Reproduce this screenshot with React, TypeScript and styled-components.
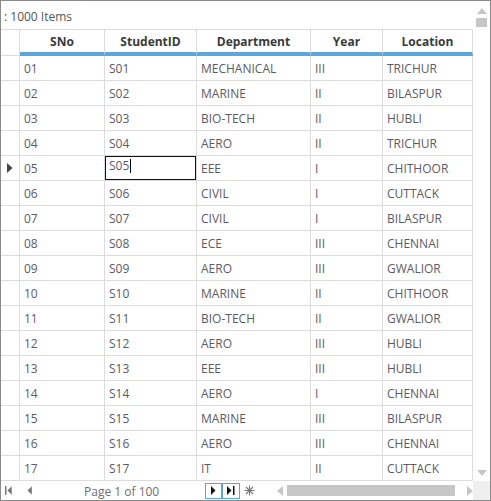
import React from "react";
import styled, { createGlobalStyle } from "styled-components";

const GlobalStyle = createGlobalStyle`
  html, body {
    margin: 0;
    padding: 0;
    background: #ffffff;
  }
  body {
    font-family: "Segoe UI", "Open Sans", "Noto Sans", sans-serif;
  }
  * {
    box-sizing: border-box;
  }
`;

const COLUMNS = "19px 85px 92px 114px 72px 90px";
const LINE = "#dcdcdc";
const ACCENT = "#5ba6dc";

type Student = {
  sno: string;
  id: string;
  dept: string;
  year: string;
  location: string;
};

const students: Student[] = [
  ["01", "S01", "MECHANICAL", "III", "TRICHUR"],
  ["02", "S02", "MARINE", "II", "BILASPUR"],
  ["03", "S03", "BIO-TECH", "II", "HUBLI"],
  ["04", "S04", "AERO", "II", "TRICHUR"],
  ["05", "S05", "EEE", "I", "CHITHOOR"],
  ["06", "S06", "CIVIL", "I", "CUTTACK"],
  ["07", "S07", "CIVIL", "I", "BILASPUR"],
  ["08", "S08", "ECE", "III", "CHENNAI"],
  ["09", "S09", "AERO", "III", "GWALIOR"],
  ["10", "S10", "MARINE", "II", "CHITHOOR"],
  ["11", "S11", "BIO-TECH", "II", "GWALIOR"],
  ["12", "S12", "AERO", "III", "HUBLI"],
  ["13", "S13", "EEE", "III", "HUBLI"],
  ["14", "S14", "AERO", "I", "CHENNAI"],
  ["15", "S15", "MARINE", "III", "BILASPUR"],
  ["16", "S16", "AERO", "III", "CHENNAI"],
  ["17", "S17", "IT", "II", "CUTTACK"],
].map(([sno, id, dept, year, location]) => ({ sno, id, dept, year, location }));

const headers = ["SNo", "StudentID", "Department", "Year", "Location"];

const Frame = styled.div`
  width: 491px;
  height: 501px;
  border: 1px solid #8a8a8a;
  display: flex;
  flex-direction: column;
  background: #fff;
  overflow: hidden;
`;

const Main = styled.div`
  display: flex;
  height: 480px;
`;

const GridArea = styled.div`
  width: 472px;
  display: flex;
  flex-direction: column;
`;

const TopBar = styled.div`
  height: 28px;
  display: flex;
  align-items: center;
  padding: 2px 0 0 3px;
  font-size: 12px;
  color: #555;
`;

const HeaderRow = styled.div`
  display: grid;
  grid-template-columns: ${COLUMNS};
  height: 27px;
  border-top: 1px solid ${LINE};
`;

const HeaderCell = styled.div<{ $blank?: boolean }>`
  display: flex;
  align-items: center;
  justify-content: center;
  padding-top: 1px;
  font-size: 12px;
  font-weight: 700;
  color: #3a3a3a;
  border-right: 1px solid ${LINE};
  border-bottom: ${(p) => (p.$blank ? `1px solid ${LINE}` : `4px solid ${ACCENT}`)};
`;

const Row = styled.div`
  display: grid;
  grid-template-columns: ${COLUMNS};
  height: 25px;
`;

const RowHeader = styled.div`
  display: flex;
  align-items: center;
  justify-content: center;
  border-right: 1px solid ${LINE};
  border-bottom: 1px solid ${LINE};
`;

const Cell = styled.div`
  display: flex;
  align-items: center;
  padding: 0 0 0 4px;
  font-size: 12px;
  color: #5e5a64;
  border-right: 1px solid ${LINE};
  border-bottom: 1px solid ${LINE};
  white-space: nowrap;
  overflow: hidden;
`;

const EditCell = styled(Cell)`
  position: relative;
  align-items: flex-start;
  padding: 0;
`;

const EditBox = styled.div`
  position: absolute;
  left: 0;
  top: 0;
  width: 91px;
  height: 24px;
  border: 1px solid #111;
  padding: 0 0 0 3px;
  display: flex;
  align-items: flex-start;
`;

const Caret = styled.span`
  display: inline-block;
  width: 1px;
  height: 14px;
  margin-top: 2px;
  margin-left: 1px;
  background: #000;
`;

const VScroll = styled.div`
  width: 17px;
  display: flex;
  flex-direction: column;
  align-items: center;
  padding-top: 7px;
  background: #fff;
`;

const Thumb = styled.div<{ $vertical?: boolean }>`
  background: #c6c6c6;
  ${(p) =>
    p.$vertical
      ? "width: 11px; height: 9px; margin-top: 4px;"
      : "width: 168px; height: 11px;"}
`;

const Spacer = styled.div`
  flex: 1;
`;

const Footer = styled.div`
  height: 19px;
  display: flex;
`;

const Pager = styled.div`
  width: 472px;
  display: flex;
  align-items: center;
  padding-left: 4px;
  font-size: 12px;
  color: #777;
`;

const PageText = styled.span`
  width: 125px;
  margin-left: 52px;
  font-size: 12px;
  color: #6f6f6f;
  padding-top: 2px;
`;

const NavButton = styled.div<{ $framed?: boolean }>`
  width: 18px;
  height: 16px;
  display: flex;
  align-items: center;
  justify-content: center;
  border: 1px solid ${(p) => (p.$framed ? ACCENT : "transparent")};
`;

const HScroll = styled.div`
  display: flex;
  align-items: center;
  margin-left: 19px;
  gap: 4px;
`;

const Corner = styled.div`
  width: 17px;
  background: #efefef;
`;

const Arrow = ({ dir, color = "#c6c6c6" }: { dir: "up" | "down" | "left" | "right"; color?: string }) => {
  const pts = {
    up: "0,6 5,0 10,6",
    down: "0,0 10,0 5,6",
    left: "6,0 6,10 0,5",
    right: "0,0 0,10 6,5",
  }[dir];
  const horiz = dir === "left" || dir === "right";
  return (
    <svg width={horiz ? 6 : 10} height={horiz ? 10 : 6} viewBox={horiz ? "0 0 6 10" : "0 0 10 6"}>
      <polygon points={pts} fill={color} />
    </svg>
  );
};

const FirstIcon = () => (
  <svg width="8" height="9" viewBox="0 0 8 9">
    <rect x="0" y="0" width="1.5" height="9" fill="#777" />
    <polygon points="7,0 7,9 2.5,4.5" fill="#777" />
  </svg>
);

const PrevIcon = () => (
  <svg width="5" height="9" viewBox="0 0 5 9">
    <polygon points="5,0 5,9 0.5,4.5" fill="#777" />
  </svg>
);

const NextIcon = () => (
  <svg width="5" height="9" viewBox="0 0 5 9">
    <polygon points="0,0 0,9 4.5,4.5" fill="#111" />
  </svg>
);

const LastIcon = () => (
  <svg width="8" height="9" viewBox="0 0 8 9">
    <polygon points="0,0 0,9 4.5,4.5" fill="#111" />
    <rect x="6" y="0" width="1.5" height="9" fill="#111" />
  </svg>
);

const NewRowIcon = () => (
  <svg width="11" height="11" viewBox="0 0 11 11" stroke="#777" strokeWidth="1.1">
    <line x1="5.5" y1="0.5" x2="5.5" y2="10.5" />
    <line x1="0.5" y1="5.5" x2="10.5" y2="5.5" />
    <line x1="2" y1="2" x2="9" y2="9" />
    <line x1="9" y1="2" x2="2" y2="9" />
  </svg>
);

const CurrentRowMark = () => (
  <svg width="6" height="10" viewBox="0 0 6 10">
    <polygon points="0,0 0,10 5.5,5" fill="#444" />
  </svg>
);

export default function App() {
  const currentIndex = 4;

  return (
    <>
      <GlobalStyle />
      <Frame>
        <Main>
          <GridArea>
            <TopBar>: 1000 Items</TopBar>
            <HeaderRow>
              <HeaderCell $blank />
              {headers.map((h) => (
                <HeaderCell key={h}>{h}</HeaderCell>
              ))}
            </HeaderRow>
            {students.map((s, i) => (
              <Row key={s.sno}>
                <RowHeader>{i === currentIndex && <CurrentRowMark />}</RowHeader>
                <Cell>{s.sno}</Cell>
                {i === currentIndex ? (
                  <EditCell>
                    <EditBox>
                      {s.id}
                      <Caret />
                    </EditBox>
                  </EditCell>
                ) : (
                  <Cell>{s.id}</Cell>
                )}
                <Cell>{s.dept}</Cell>
                <Cell>{s.year}</Cell>
                <Cell>{s.location}</Cell>
              </Row>
            ))}
          </GridArea>
          <VScroll>
            <Arrow dir="up" />
            <Thumb $vertical />
            <Spacer />
            <Arrow dir="down" />
            <div style={{ height: 5 }} />
          </VScroll>
        </Main>
        <Footer>
          <Pager>
            <FirstIcon />
            <div style={{ width: 15 }} />
            <PrevIcon />
            <PageText>Page 1 of 100</PageText>
            <NavButton $framed>
              <NextIcon />
            </NavButton>
            <NavButton $framed>
              <LastIcon />
            </NavButton>
            <NavButton style={{ marginLeft: 1 }}>
              <NewRowIcon />
            </NavButton>
            <HScroll>
              <Arrow dir="left" />
              <Thumb />
              <div style={{ width: 4 }} />
              <Arrow dir="right" />
            </HScroll>
          </Pager>
          <Corner />
        </Footer>
      </Frame>
    </>
  );
}
